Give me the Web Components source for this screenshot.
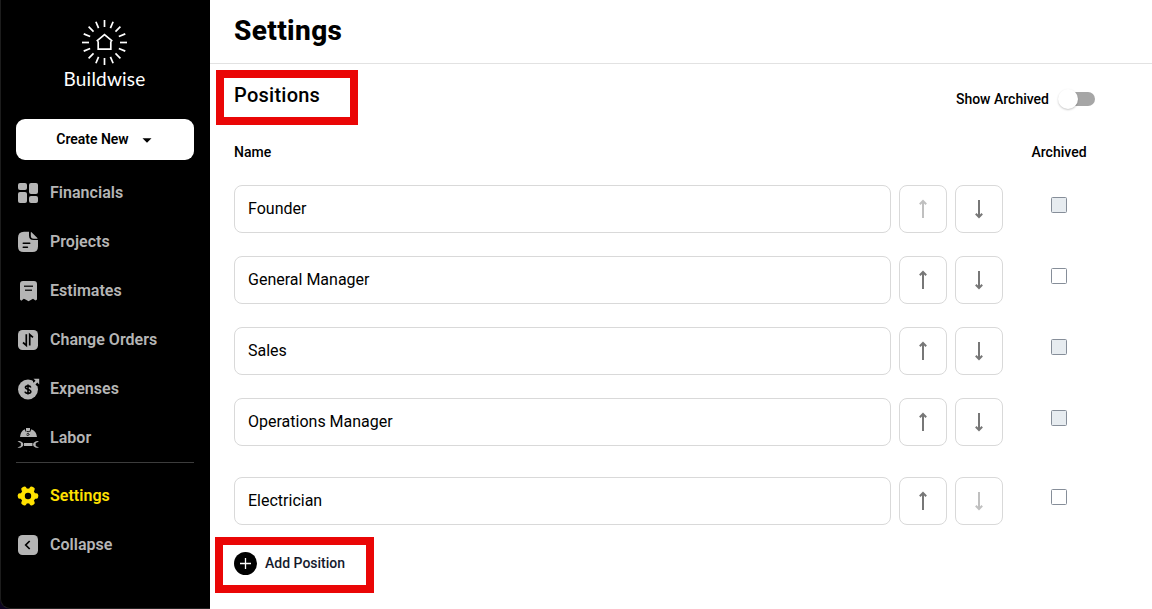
<!DOCTYPE html>
<html lang="en">
<head>
<meta charset="utf-8">
<title>Settings</title>
<style>
html,body{margin:0;height:609px;overflow:hidden;background:#fff;font-family:Roboto,"Liberation Sans",sans-serif;color:#000}
</style>
</head>
<body>
<app-shell>
  <side-bar slot="side">
    <nav-item icon="financials">Financials</nav-item>
    <nav-item icon="projects">Projects</nav-item>
    <nav-item icon="estimates">Estimates</nav-item>
    <nav-item icon="orders">Change Orders</nav-item>
    <nav-item icon="expenses">Expenses</nav-item>
    <nav-item icon="labor">Labor</nav-item>
    <nav-item slot="foot" icon="settings" active>Settings</nav-item>
    <nav-item slot="foot" icon="collapse">Collapse</nav-item>
  </side-bar>
  <settings-page heading="Settings">
    <position-row disabled-up shaded>Founder</position-row>
    <position-row>General Manager</position-row>
    <position-row shaded>Sales</position-row>
    <position-row shaded>Operations Manager</position-row>
    <position-row last disabled-down>Electrician</position-row>
  </settings-page>
</app-shell>
<script>
const define = (name, render) => customElements.define(name, class extends HTMLElement {
  constructor(){ super(); this.attachShadow({mode:'open'}); }
  connectedCallback(){ this.shadowRoot.innerHTML = render(this); }
});

define('app-shell', () => `
<style>:host{display:grid;grid-template-columns:210px 1fr;width:1152px;height:609px;position:relative}</style>
<slot name="side"></slot><slot></slot>`);

const rays = Array.from({length:16},(_,i)=>`<path d="M23.5 1v7" transform="rotate(${i*22.5} 23.5 23.5)"/>`).join('');
define('brand-logo', () => `
<style>
:host{display:flex;flex-direction:column;align-items:center;height:119px;box-sizing:border-box;padding:19px 1px 0 0}
svg{display:block;width:47px;height:47px}
span{font:400 19px/24px Lato,sans-serif;color:#fff;letter-spacing:.2px;margin-top:1px}
</style>
<svg viewBox="0 0 47 47" fill="none" stroke="#fff" stroke-width="1.7">${rays}
<path d="M15.700 22.200 23.500 15.700l7.800 6.500M17.200 22.200v8h12.600v-8"/></svg>
<span>Buildwise</span>`);

define('side-bar', () => `
<style>
:host{display:block;background:#0c0420;height:609px}
aside{box-sizing:border-box;height:609px;background:#000;border-left:1px solid #1c1c1c;border-bottom:1px solid #222;border-bottom-left-radius:10px;padding:0 16px 0 15px}
button{display:flex;align-items:center;justify-content:center;gap:13px;width:178px;height:41px;border:0;border-radius:9px;background:#fff;color:#000;font:600 14px/20px Roboto,sans-serif;letter-spacing:-.03px;padding:0 2px 1px 0}
button svg{margin-top:2px}
nav{display:flex;flex-direction:column;padding-top:8px}
hr{height:1px;border:0;background:#3c3c3c;margin:0}
.foot{padding-top:8px}
</style>
<aside><brand-logo></brand-logo>
<button>Create New<svg width="10" height="5" viewBox="0 0 10 5"><path d="M.5 .3h9L5 4.800z" fill="#000"/></svg></button>
<nav><slot></slot></nav><hr><nav class="foot"><slot name="foot"></slot></nav></aside>`);

const teeth = Array.from({length:6},(_,i)=>`<rect x="9.300" y="1.800" width="5.400" height="7" rx="1.900" transform="rotate(${30+i*60} 12 12)"/>`).join('');
const icons = {
financials:`<rect x="2" y="2" width="9" height="7" rx="2"/><rect x="13" y="2" width="9" height="11" rx="2"/><rect x="2" y="11" width="9" height="11" rx="2"/><rect x="13" y="15" width="9" height="7" rx="2"/>`,
projects:`<path d="M8 1.800h5v3.700Q13 10 17.500 10H22v6.500q0 5.500-5.500 5.500h-9Q2 22 2 16.500V7.800q0-6 6-6z"/><path d="M14.800 2.600q0-.9.700-.3l5.900 5.600q.6.800-.3.800h-3.300q-3 0-3-3z"/><path d="M7.200 13.200h6.600M7.200 17.200h4.300" stroke="#000" stroke-width="1.400" stroke-linecap="round"/>`,
estimates:`<path d="M7 2h11q3 0 3 3v15.500l-1.500 1-2.500-1.800L14.800 21l-2.300 1.300L10 20.800l-2.200-1.100-2.500 2L4 20.500V5q0-3 3-3z"/><path d="M8 7.300h9M9 11.200h7" stroke="#222" stroke-width="1.500"/>`,
orders:`<rect x="2" y="2" width="20" height="20" rx="4.500"/><path d="M10.300 6.300v11L7 14.500M13.700 17.500v-11l3.300 2.800" fill="none" stroke="#000" stroke-width="1.700"/>`,
expenses:`<circle cx="12" cy="12.500" r="10"/><path d="M17 1h7v8h-3l-4-4z" fill="#000"/><path d="M17.500 1.800h5.700v5.700l-1.900-1.900-3.300 3.400-1.800-1.800 3.300-3.400z"/><path d="M14.800 10.400q-.5-1.500-2.800-1.500-2.600 0-2.600 1.700c0 2.400 5.400 1.400 5.400 3.900q0 1.800-2.800 1.800-2.600 0-3-1.700M12 7.500v10" fill="none" stroke="#000" stroke-width="1.600"/>`,
labor:`<path d="M4 11q.4-5.500 4.700-7.700l1.300 3V2h4v4.300l1.300-3Q20.600 5.500 21 11z"/><path d="M10.500 5.300q1.500 1 3.500-.2M10.500 8.200q.8-1 2-.6 1.300.6.300 1.500l-2 .3" fill="none" stroke="#000" stroke-width=".9"/><rect x="8" y="17" width="8.500" height="3"/><path d="M1.500 15.500q1.800-.8 3.500 0c3.200 1.500 3.200 4.500 0 6q-1.700.6-3.500 0L4.800 20v-3zM23 15.500q-1.800-.8-3.500 0c-3.200 1.500-3.200 4.500 0 6q1.700.6 3.500 0L19.700 20v-3z"/>`,
settings:`${teeth}<circle cx="12" cy="12" r="7.600"/><circle cx="12" cy="12" r="3.200" fill="#000"/>`,
collapse:`<rect x="2" y="2" width="20" height="20" rx="4.500"/><path d="m13.700 8-4 4 4 4" fill="none" stroke="#000" stroke-width="1.700"/>`};
define('nav-item', el => `
<style>
:host{display:flex;align-items:center;gap:10px;height:49px;color:#b5b5b5;font:600 16px/24px Roboto,sans-serif;letter-spacing:.03px}
:host([active]){color:#ffe100}
svg{width:24px;height:24px;fill:currentColor;flex:none}
</style>
<svg viewBox="0 0 24 24">${icons[el.getAttribute('icon')]}</svg><span><slot></slot></span>`);

define('toggle-switch', () => `
<style>
:host{display:flex;align-items:center;width:37px;height:20px}
.track{width:34px;height:14px;margin-left:3px;border-radius:7px;background:#a6a6a6;display:flex;align-items:center}
i{flex:none;width:20px;height:20px;border-radius:50%;background:#fff;margin-left:-3px;box-shadow:0 1px 2px rgba(0,0,0,.22)}
</style><div class="track"><i></i></div>`);

define('mark-box', () => `
<style>
:host{display:block;box-sizing:border-box;border:8px solid #ea0606;position:absolute;pointer-events:none}
</style>`);

define('settings-page', el => `
<style>
:host{display:flex;flex-direction:column;min-width:0}
header{height:64px;box-sizing:border-box;border-bottom:1px solid #e2e2e2;padding:12px 24px}
h1{margin:0;font:800 28px/37px Roboto,sans-serif;letter-spacing:.36px}
.title{display:flex;align-items:center;justify-content:space-between;height:63px;padding:0 57px 0 24px}
h2{margin:-2px 0 0;font:500 20px/24px Roboto,sans-serif;letter-spacing:.25px}
.show{display:flex;align-items:center;gap:9px;font:500 14px/20px Roboto,sans-serif;padding-top:7px}
.cols{display:grid;grid-template-columns:769px 112px;height:58px;padding-left:24px;font:500 14px/20px Roboto,sans-serif;letter-spacing:.03px;box-sizing:border-box;padding-top:15px}
.cols span:last-child{text-align:center}
.add{display:flex;align-items:center;gap:8px;height:24px;margin:26px 0 0 24px;font:500 14px/20px Roboto,sans-serif;color:#151a2d}
.add svg{width:23px;height:23px}
.m1{left:216px;top:70px;width:142px;height:55px}
.m2{left:215px;top:537px;width:159px;height:56px}
</style>
<header><h1>${el.getAttribute('heading')}</h1></header>
<div class="title"><h2>Positions</h2><div class="show">Show Archived<toggle-switch></toggle-switch></div></div>
<div class="cols"><span>Name</span><span>Archived</span></div>
<slot></slot>
<div class="add"><svg viewBox="0 0 23 23"><circle cx="11.500" cy="11.500" r="11.500"/><path d="M11.500 6v11M6 11.500h11" stroke="#fff" stroke-width="1.300"/></svg><span>Add Position</span></div>
<mark-box class="m1"></mark-box><mark-box class="m2"></mark-box>`);

define('position-row', () => `
<style>
:host{display:grid;grid-template-columns:657px 48px 48px 112px;column-gap:8px;height:48px;margin:0 0 23px 24px}
:host([last]){margin-top:8px;margin-bottom:0}
div{box-sizing:border-box;border:1px solid #d9d9d9;border-radius:8px;display:flex;align-items:center}
.field{padding:0 13px;font:400 16px/24px Roboto,sans-serif}
.btn{justify-content:center}
svg{width:12px;height:20px;fill:none;stroke:#777;stroke-width:2}
:host([disabled-up]) .up svg,:host([disabled-down]) .down svg{stroke:#c0c0c0}
i{box-sizing:border-box;width:16px;height:16px;border:1px solid #868e99;border-radius:1.5px;margin:12px 0 0 40px}
:host([shaded]) i{background:#e7ecf0}
</style>
<div class="field"><slot></slot></div>
<div class="btn up"><svg viewBox="0 0 12 20"><path d="M6 19V2M2.800 5.200 6 2l3.200 3.200"/></svg></div>
<div class="btn down"><svg viewBox="0 0 12 20"><path d="M6 1v17M2.800 14.800 6 18l3.200-3.200"/></svg></div>
<i></i>`);
</script>
</body>
</html>
